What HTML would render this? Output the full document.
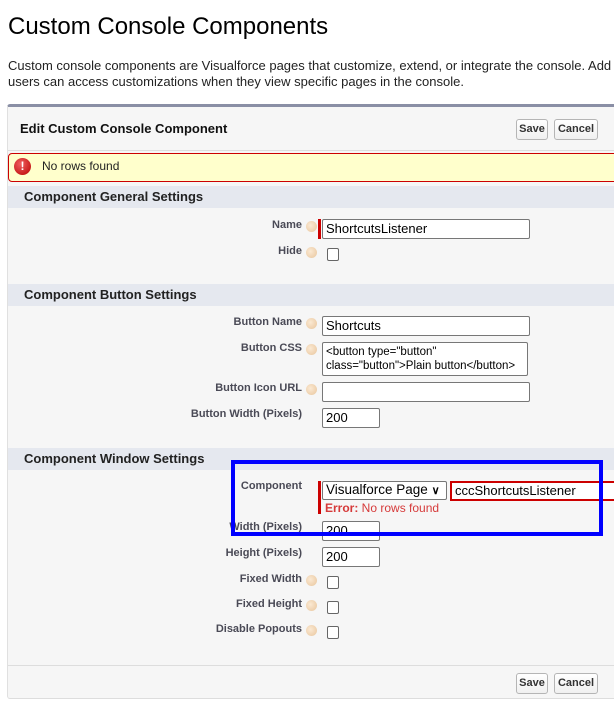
<!DOCTYPE html>
<html><head><style>
*{box-sizing:border-box;margin:0;padding:0}
body{width:614px;height:714px;overflow:hidden;background:#fff;font-family:"Liberation Sans",Arial,sans-serif;position:relative}
.a{position:absolute}
.lbl{position:absolute;right:312px;font-size:11px;font-weight:bold;color:#4a4a56;white-space:nowrap}
.help{position:absolute;width:11px;height:11px;border-radius:50%;background:radial-gradient(circle at 40% 40%,#fbe9d3,#e8c59c);color:#fff;font-size:8px;text-align:center;line-height:11px}
.inp{position:absolute;border:1px solid #777;border-radius:2px;background:#fff;font-size:13px;color:#000;padding:0 3px;height:20px;line-height:17px}
.cb{position:absolute;width:12px;height:13px;border:1px solid #666;border-radius:2px;background:#fff}
.sec{position:absolute;left:8px;width:606px;height:22px;background:#e5e8ef;font-size:13px;font-weight:bold;color:#222;padding:3px 0 0 16px}
.btn{position:absolute;height:21px;border:1px solid #b5b5b5;border-radius:3px;background:linear-gradient(#fff,#f0f0f0);font-size:11px;font-weight:bold;color:#333;text-align:center;line-height:19px}
.bar{position:absolute;left:318px;width:3px;background:#c00}
</style></head><body>
<div class="a" style="left:8px;top:13px;font-size:24px;color:#000">Custom Console Components</div>
<div class="a" style="left:8px;top:58px;font-size:13px;color:#222;line-height:16px;white-space:nowrap">Custom console components are Visualforce pages that customize, extend, or integrate the console. Add<br>users can access customizations when they view specific pages in the console.</div>

<div class="a" style="left:7px;top:104px;width:610px;height:595px;background:#f6f6f6;border-top:3px solid #8a8fa5;border-left:1px solid #e0e0e0;border-bottom:1px solid #ddd;border-radius:3px"></div>
<div class="a" style="left:20px;top:121px;font-size:13px;font-weight:bold;color:#111">Edit Custom Console Component</div>
<div class="btn" style="left:516px;top:119px;width:32px">Save</div>
<div class="btn" style="left:554px;top:119px;width:44px">Cancel</div>
<div class="a" style="left:8px;top:150px;width:606px;height:1px;background:#ddd"></div>

<div class="a" style="left:8px;top:153px;width:610px;height:29px;background:#ffffcc;border:1px solid #c00;border-radius:4px"></div>
<div class="a" style="left:14px;top:158px;width:17px;height:17px;border-radius:50%;background:radial-gradient(circle at 40% 35%,#f06060,#b80000);color:#fff;font-size:12px;font-weight:bold;text-align:center;line-height:17px">!</div>
<div class="a" style="left:42px;top:159px;font-size:12px;color:#222">No rows found</div>

<div class="sec" style="top:186px">Component General Settings</div>
<div class="lbl" style="top:219px">Name</div><div class="help" style="left:306px;top:221px"></div>
<div class="bar" style="top:219px;height:20px"></div>
<div class="inp" style="left:322px;top:219px;width:208px">ShortcutsListener</div>
<div class="lbl" style="top:245px">Hide</div><div class="help" style="left:306px;top:247px"></div>
<div class="cb" style="left:327px;top:248px"></div>

<div class="sec" style="top:284px">Component Button Settings</div>
<div class="lbl" style="top:316px">Button Name</div><div class="help" style="left:306px;top:318px"></div>
<div class="inp" style="left:322px;top:316px;width:208px">Shortcuts</div>
<div class="lbl" style="top:342px">Button CSS</div><div class="help" style="left:306px;top:344px"></div>
<div class="inp" style="left:322px;top:342px;width:206px;height:34px;font-size:11.5px;line-height:14px;padding:2px 3px;white-space:nowrap;overflow:hidden">&lt;button type="button"<br>class="button"&gt;Plain button&lt;/button&gt;</div>
<div class="lbl" style="top:382px">Button Icon URL</div><div class="help" style="left:306px;top:384px"></div>
<div class="inp" style="left:322px;top:382px;width:208px"></div>
<div class="lbl" style="top:408px">Button Width (Pixels)</div>
<div class="inp" style="left:322px;top:408px;width:58px">200</div>

<div class="sec" style="top:448px">Component Window Settings</div>
<div class="lbl" style="top:480px">Component</div>
<div class="bar" style="top:481px;height:33px"></div>
<div class="inp" style="left:322px;top:481px;width:125px;height:19px;line-height:16px;font-size:13.5px;white-space:nowrap">Visualforce Page <b style="font-size:11px">&#x2228;</b></div>
<div class="inp" style="left:450px;top:481px;width:170px;height:20px;border:2px solid #c00;border-radius:0;line-height:15px">cccShortcutsListener</div>
<div class="a" style="left:325px;top:501px;font-size:12px;color:#d63a3a"><b>Error:</b> No rows found</div>
<div class="lbl" style="top:521px">Width (Pixels)</div>
<div class="inp" style="left:322px;top:521px;width:58px">200</div>
<div class="lbl" style="top:547px">Height (Pixels)</div>
<div class="inp" style="left:322px;top:547px;width:58px">200</div>
<div class="lbl" style="top:573px">Fixed Width</div><div class="help" style="left:306px;top:575px"></div>
<div class="cb" style="left:327px;top:576px"></div>
<div class="lbl" style="top:598px">Fixed Height</div><div class="help" style="left:306px;top:600px"></div>
<div class="cb" style="left:327px;top:601px"></div>
<div class="lbl" style="top:623px">Disable Popouts</div><div class="help" style="left:306px;top:625px"></div>
<div class="cb" style="left:327px;top:626px"></div>

<div class="a" style="left:231px;top:460px;width:372px;height:76px;border:4px solid #0000ff"></div>

<div class="a" style="left:8px;top:665px;width:606px;height:1px;background:#ddd"></div>
<div class="btn" style="left:516px;top:673px;width:32px">Save</div>
<div class="btn" style="left:554px;top:673px;width:44px">Cancel</div>
</body></html>
